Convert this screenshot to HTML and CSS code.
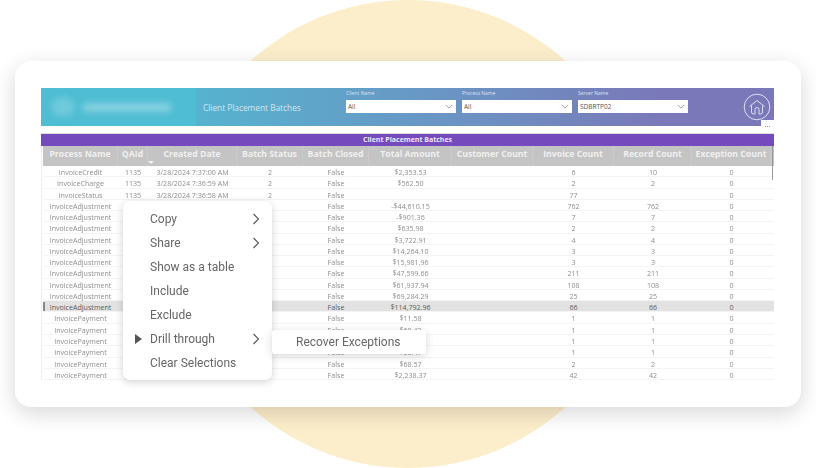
FILE: index.html
```html
<!DOCTYPE html>
<html lang="en">
<head>
    <meta charset="UTF-8">
    <meta name="viewport" content="width=device-width, initial-scale=1.0">
    <link rel="stylesheet" href="styles.css">
    <title>Client Placement Batches</title>
</head>
<body>
    <div class="stage">
        <div class="sun"></div>
        <div class="card">
            <div class="report">
                <div class="banner">
                    <div class="logo"><i class="logo-mark"></i><i class="logo-name"></i></div>
                    <div class="banner-title">Client Placement Batches</div>
                    <div class="slicer">
                        <label>Client Name</label>
                        <div class="select">All<svg viewBox="0 0 10 6"><path d="M1 1l4 4 4-4"/></svg></div>
                    </div>
                    <div class="slicer">
                        <label>Process Name</label>
                        <div class="select">All<svg viewBox="0 0 10 6"><path d="M1 1l4 4 4-4"/></svg></div>
                    </div>
                    <div class="slicer">
                        <label>Server Name</label>
                        <div class="select">SDBRTP02<svg viewBox="0 0 10 6"><path d="M1 1l4 4 4-4"/></svg></div>
                    </div>
                    <svg class="home" viewBox="0 0 28 28">
                        <circle cx="14" cy="14" r="12.8"/>
                        <path d="M6.500 13.500L14 7.500l7.500 6M8.500 12.500v6.500q0 2 2 2h1.500v-4.500q0-2 2-2t2 2V21h1.500q2 0 2-2v-6.500"/>
                    </svg>
                    <div class="more">...</div>
                </div>

                <div class="table-title">Client Placement Batches</div>
                <div class="table">
                    <div class="row head">
                        <span>Process Name</span><span>QAId<i class="sort"></i></span><span>Created Date</span><span>Batch Status</span><span>Batch Closed</span><span>Total Amount</span><span>Customer Count</span><span>Invoice Count</span><span>Record Count</span><span>Exception Count</span>
                    </div>
                    <div class="row"><span>InvoiceCredit</span><span>1135</span><span>3/28/2024 7:37:00 AM</span><span>2</span><span>False</span><span>$2,353.53</span><span></span><span>6</span><span>10</span><span>0</span></div>
                    <div class="row"><span>InvoiceCharge</span><span>1135</span><span>3/28/2024 7:36:59 AM</span><span>2</span><span>False</span><span>$562.50</span><span></span><span>2</span><span>2</span><span>0</span></div>
                    <div class="row"><span>InvoiceStatus</span><span>1135</span><span>3/28/2024 7:36:58 AM</span><span>2</span><span>False</span><span></span><span></span><span>77</span><span></span><span>0</span></div>
                    <div class="row"><span>InvoiceAdjustment</span><span></span><span></span><span></span><span>False</span><span>-$44,610.15</span><span></span><span>762</span><span>762</span><span>0</span></div>
                    <div class="row"><span>InvoiceAdjustment</span><span></span><span></span><span></span><span>False</span><span>-$901.36</span><span></span><span>7</span><span>7</span><span>0</span></div>
                    <div class="row"><span>InvoiceAdjustment</span><span></span><span></span><span></span><span>False</span><span>$635.98</span><span></span><span>2</span><span>2</span><span>0</span></div>
                    <div class="row"><span>InvoiceAdjustment</span><span></span><span></span><span></span><span>False</span><span>$3,722.91</span><span></span><span>4</span><span>4</span><span>0</span></div>
                    <div class="row"><span>InvoiceAdjustment</span><span></span><span></span><span></span><span>False</span><span>$14,264.10</span><span></span><span>3</span><span>3</span><span>0</span></div>
                    <div class="row"><span>InvoiceAdjustment</span><span></span><span></span><span></span><span>False</span><span>$15,981.96</span><span></span><span>3</span><span>3</span><span>0</span></div>
                    <div class="row"><span>InvoiceAdjustment</span><span></span><span></span><span></span><span>False</span><span>$47,599.66</span><span></span><span>211</span><span>211</span><span>0</span></div>
                    <div class="row"><span>InvoiceAdjustment</span><span></span><span></span><span></span><span>False</span><span>$61,937.94</span><span></span><span>108</span><span>108</span><span>0</span></div>
                    <div class="row"><span>InvoiceAdjustment</span><span></span><span></span><span></span><span>False</span><span>$69,284.29</span><span></span><span>25</span><span>25</span><span>0</span></div>
                    <div class="row selected"><span>InvoiceAdjustment</span><span></span><span></span><span></span><span>False</span><span>$114,792.96</span><span></span><span>66</span><span>66</span><span>0</span></div>
                    <div class="row"><span>InvoicePayment</span><span></span><span></span><span></span><span>False</span><span>$11.58</span><span></span><span>1</span><span>1</span><span>0</span></div>
                    <div class="row"><span>InvoicePayment</span><span></span><span></span><span></span><span>False</span><span>$68.42</span><span></span><span>1</span><span>1</span><span>0</span></div>
                    <div class="row"><span>InvoicePayment</span><span></span><span></span><span></span><span></span><span></span><span></span><span>1</span><span>1</span><span>0</span></div>
                    <div class="row"><span>InvoicePayment</span><span></span><span></span><span></span><span>False</span><span>$50.47</span><span></span><span>1</span><span>1</span><span>0</span></div>
                    <div class="row"><span>InvoicePayment</span><span></span><span></span><span></span><span>False</span><span>$68.57</span><span></span><span>2</span><span>2</span><span>0</span></div>
                    <div class="row"><span>InvoicePayment</span><span></span><span></span><span></span><span>False</span><span>$2,238.37</span><span></span><span>42</span><span>42</span><span>0</span></div>
                    <div class="scrollbar"></div>
                </div>
            </div>

            <!-- right click menu over the table -->
            <ul class="menu">
                <li>Copy<svg viewBox="0 0 8 12"><path d="M1.500 1l5 5-5 5"/></svg></li>
                <li>Share<svg viewBox="0 0 8 12"><path d="M1.500 1l5 5-5 5"/></svg></li>
                <li>Show as a table</li>
                <li>Include</li>
                <li>Exclude</li>
                <li class="active">Drill through<svg viewBox="0 0 8 12"><path d="M1.500 1l5 5-5 5"/></svg></li>
                <li>Clear Selections</li>
            </ul>
            <div class="submenu">Recover Exceptions</div>
        </div>
    </div>
</body>
</html>
```

FILE: styles.css
```css
html, body {
    margin: 0;
    background: #fff;
}

.stage {
    position: relative;
    width: 816px;
    height: 468px;
    padding: 61px 15px 0;
    box-sizing: border-box;
    overflow: hidden;
}

.sun {
    position: absolute;
    left: 174px;
    top: 0;
    width: 468px;
    height: 468px;
    border-radius: 50%;
    background: #fdeecb;
}

.card {
    position: relative;
    width: 786px;
    height: 346px;
    padding: 27px 27px 0 26px;
    box-sizing: border-box;
    background: #fff;
    border-radius: 16px;
    box-shadow: 0 6px 22px rgba(0, 0, 0, 0.16);
}

/* the report is a blurry picture in the original */
.report {
    width: 733px;
    font-family: "Open Sans", sans-serif;
    filter: blur(0.6px);
}

.banner {
    position: relative;
    display: flex;
    height: 38px;
    background: linear-gradient(90deg, #55b4cf 20%, #6a95c4 55%, #7a78b8 85%);
}

.logo {
    display: flex;
    align-items: center;
    gap: 8px;
    width: 155px;
    padding-left: 10px;
    box-sizing: border-box;
    background: #4fbdd3;
}

.logo-mark {
    width: 24px;
    height: 20px;
    border-radius: 50%;
    background: #6ecadb;
    filter: blur(3px);
}

.logo-name {
    width: 88px;
    height: 9px;
    background: #84d2df;
    filter: blur(3px);
}

.banner-title {
    width: 150px;
    padding: 14px 0 0 7px;
    box-sizing: border-box;
    font-size: 8.300px;
    color: #d3e6f0;
}

.slicer {
    width: 110px;
    margin-right: 6px;
    font-size: 5px;
    color: #dfe3f3;
}

.slicer label {
    display: block;
    height: 12px;
    line-height: 10px;
}

.slicer .select {
    display: flex;
    justify-content: space-between;
    align-items: center;
    height: 13px;
    padding: 0 3px 0 2px;
    background: #fff;
    font-size: 6.500px;
    color: #555;
}

.select svg {
    width: 8px;
    height: 5px;
    fill: none;
    stroke: #888;
    stroke-width: 1;
}

.home {
    position: absolute;
    right: 3px;
    top: 5px;
    width: 28px;
    height: 28px;
    fill: none;
    stroke: #dcdff0;
    stroke-width: 1;
}

.more {
    position: absolute;
    right: 0;
    bottom: 0;
    width: 13px;
    height: 6px;
    background: #fff;
    font-size: 7px;
    line-height: 10px;
    text-align: center;
    color: #555;
}

.table-title {
    height: 12px;
    margin-top: 7px;
    background: #744abd;
    border-top: 1px solid #ddd;
    font-size: 7px;
    font-weight: 700;
    line-height: 12px;
    text-align: center;
    color: #eee8f8;
}

.table {
    position: relative;
    height: 234px;
    border-left: 1px solid #eee;
    padding-left: 1px;
    overflow: hidden;
}

.row {
    display: grid;
    grid-template-columns: 75px 30px 89px 66px 66px 83px 81px 81px 78px 79px;
    height: 11.280px;
    border-bottom: 1px solid #f4f4f4;
    box-sizing: border-box;
    font-size: 7.100px;
    line-height: 12px;
    color: #8e8e8e;
    text-align: center;
    white-space: nowrap;
}

.row.head {
    position: relative;
    height: 20px;
    background: #c4c4c4;
    border-bottom: 0;
    font-size: 8.700px;
    font-weight: 700;
    line-height: 17px;
    color: #f0f0f0;
}

.row.head span {
    border-right: 1px solid #cbcbcb;
}

.row.selected {
    position: relative;
    background: #e2e2e2;
    color: #5c5c5c;
}

.row.selected::before {
    content: "";
    position: absolute;
    left: 0;
    top: 1px;
    width: 2px;
    height: 9px;
    background: #888;
}

.sort {
    position: absolute;
    left: 105px;
    top: 15px;
    border: 3px solid transparent;
    border-top-color: #f4f4f4;
    border-bottom: 0;
}

.scrollbar {
    position: absolute;
    right: 1px;
    top: 0;
    width: 1.500px;
    height: 34px;
    background: #999;
}

.menu {
    position: absolute;
    left: 108px;
    top: 140px;
    width: 149px;
    height: 179px;
    margin: 0;
    padding: 6px 0 0;
    box-sizing: border-box;
    list-style: none;
    background: #fff;
    border-radius: 7px;
    box-shadow: 0 2px 8px rgba(0, 0, 0, 0.18);
    font-family: Roboto, sans-serif;
    font-size: 12px;
    color: #666;
}

.menu li {
    position: relative;
    height: 24px;
    padding-left: 27px;
    line-height: 24px;
}

.menu svg {
    position: absolute;
    left: 129px;
    top: 6px;
    width: 8px;
    height: 12px;
    fill: none;
    stroke: #555;
    stroke-width: 1.100;
}

.menu .active::before {
    content: "";
    position: absolute;
    left: 12px;
    top: 7px;
    border-left: 7px solid #555;
    border-top: 5px solid transparent;
    border-bottom: 5px solid transparent;
}

.submenu {
    position: absolute;
    left: 257px;
    top: 269px;
    width: 154px;
    height: 24px;
    padding-left: 24px;
    box-sizing: border-box;
    background: #fff;
    border-radius: 3px;
    box-shadow: 0 2px 8px rgba(0, 0, 0, 0.16);
    font-family: Roboto, sans-serif;
    font-size: 12px;
    line-height: 24px;
    color: #666;
}
```
